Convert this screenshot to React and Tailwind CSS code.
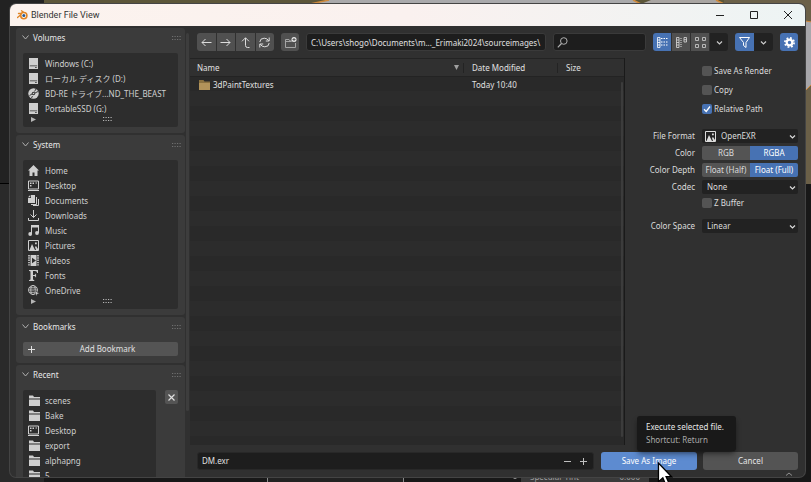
import React, { useState } from 'react';

const volumes = [
  { name: 'Windows (C:)', icon: 'drive' },
  { name: 'ローカル ディスク (D:)', icon: 'drive' },
  { name: 'BD-RE ドライブ...ND_THE_BEAST', icon: 'disc' },
  { name: 'PortableSSD (G:)', icon: 'drive' },
];

const system = [
  { name: 'Home', icon: 'home' },
  { name: 'Desktop', icon: 'desktop' },
  { name: 'Documents', icon: 'documents' },
  { name: 'Downloads', icon: 'download' },
  { name: 'Music', icon: 'music' },
  { name: 'Pictures', icon: 'picture' },
  { name: 'Videos', icon: 'video' },
  { name: 'Fonts', icon: 'font' },
  { name: 'OneDrive', icon: 'globe' },
];

const recent = [
  { name: 'scenes', icon: 'folder' },
  { name: 'Bake', icon: 'folder' },
  { name: 'Desktop', icon: 'desktop' },
  { name: 'export', icon: 'folder' },
  { name: 'alphapng', icon: 'folder' },
  { name: '5', icon: 'folder' },
];

const line = { fill: 'none', stroke: 'currentColor', strokeWidth: 1 };

const shapes = {
  drive: (
    <>
      <path fill="currentColor" fillRule="evenodd" d="M1 0h9v7.500H1zM1 8.300h9V11H1zM7 9.200v.9h1.800v-.9z" />
      <path fill="currentColor" d="M1 7h.8v2H1zM9.200 7h.8v2h-.8z" />
    </>
  ),
  disc: (
    <>
      <circle cx="5.500" cy="5.500" r="5.200" fill="currentColor" />
      <path d="M1.500 7.500L4 6M7 5l3-1.500M3.500 10l1-2M8 1L6.500 3.500" stroke="#2d2d2d" strokeWidth="0.900" />
      <circle cx="5.500" cy="5.500" r="1.700" fill="#2d2d2d" />
      <circle cx="5.500" cy="5.500" r="0.800" fill="currentColor" />
    </>
  ),
  home: <path fill="currentColor" d="M5.500 0L0 5.500h1.500V11h3V7.500h2V11h3V5.500H11z" />,
  desktop: (
    <>
      <path {...line} d="M.5 1h10v8H.5zM0 10.500h11" />
      <path fill="currentColor" d="M2 2.500h1.500V4H2zM4.500 2.500H6V4H4.500zM2 5h1.500v1.500H2zM7.500 2.500H9v1H7.500z" />
    </>
  ),
  documents: (
    <>
      <path fill="currentColor" d="M3 0h4v8H0V3h3z" />
      <path fill="currentColor" d="M0 2.300L2.300 0v2.300z" />
      <path {...line} d="M8.500 2v7.500H3M10.500 4v6.500H5" />
    </>
  ),
  download: <path {...line} d="M5.500 0v7.500M2.500 4.500l3 3 3-3M.5 8v2.500h10V8" />,
  music: (
    <>
      <path fill="currentColor" d="M3 0h8v2.500H3z" />
      <path {...line} d="M3.500 1v8M10.500 1v7" />
      <circle cx="2.200" cy="9" r="1.900" fill="currentColor" />
      <circle cx="9" cy="8" r="1.900" fill="currentColor" />
    </>
  ),
  picture: (
    <>
      <path {...line} d="M.5.5h10v10H.5z" />
      <path fill="currentColor" d="M1.500 10l2.500-6 3 6zM7 2.500h1.800v1.800H7zM7 7l1-1 2 3v1H8z" />
    </>
  ),
  video: (
    <>
      <path fill="currentColor" d="M2.500 0h6v11h-6z" />
      <path d="M1 0v11M10 0v11" stroke="currentColor" strokeWidth="1.600" strokeDasharray="1.400 .9" />
      <path fill="#2d2d2d" d="M4 2.800l4 2.700-4 2.700z" />
    </>
  ),
  font: <path fill="currentColor" d="M1 0h9v3h-.8Q9 1 7 1H5v4h1.200Q7.300 5 7.500 3.700h.6v3.600h-.6Q7.300 6 6.200 6H5v3.500l1.300.7v.8H1v-.8l1.500-.7v-8L1 .8z" />,
  globe: (
    <>
      <circle cx="5" cy="5" r="4.500" {...line} strokeWidth="0.800" />
      <ellipse cx="5" cy="5" rx="2.200" ry="4.500" {...line} strokeWidth="0.800" />
      <path {...line} strokeWidth="0.800" d="M.5 5h9M1.200 2.800h7.600M1.200 7.300h7.600" />
      <path fill="currentColor" stroke="#2d2d2d" strokeWidth="0.500" d="M6.500 5.500l5 3-2.200.5-.8 2.300z" />
    </>
  ),
  folder: <path fill="currentColor" d="M1 0.500h4l1 1.500h6v1.500H1zM1 4.500h11V11H1z" />,
  plus: <path {...line} d="M5.500 2v7M2 5.500h7" />,
  minus: <path {...line} d="M2 5.500h7" />,
  close: <path {...line} strokeWidth="1.200" d="M2.500 2.500l6 6M8.500 2.500l-6 6" />,
  left: <path {...line} d="M10.500 5.500H1M4.500 2L1 5.500 4.500 9" />,
  right: <path {...line} d="M.5 5.500H10M6.500 2L10 5.500 6.500 9" />,
  up: <path {...line} d="M9.500 10.500h-2q-2 0-2-2V.8M2 4.300L5.500.8 9 4.300" />,
  refresh: <path {...line} d="M.8 5Q1 1.200 5.200 1.200q3 0 4.600 2.600M10.200.5v3.500H6.800M10.200 6q-.2 3.800-4.400 3.800-3 0-4.600-2.600M.8 10.500V7h3.400" />,
  newFolder: (
    <>
      <path {...line} stroke="#a5a5a5" d="M.5 10.500v-8H4l1 1.500h2M10.500 6v4.500H.5M.5 4.500h6" />
      <circle cx="9" cy="2.500" r="2.500" fill="#e6e6e6" />
      <path d="M9 1v3M7.500 2.500h3" stroke="#545454" strokeWidth="0.900" />
    </>
  ),
  search: (
    <>
      <circle cx="6.800" cy="4" r="3.300" {...line} />
      <path {...line} strokeWidth="1.200" d="M4.500 6.500L.8 10.300" />
    </>
  ),
  listV: (
    <>
      <path {...line} strokeWidth="0.800" d="M.5.5H3v10H.5zM.5 3H3M.5 5.500H3M.5 8H3" />
      <path {...line} strokeDasharray="1.500 1" d="M4 1.500h7.500M4 5h7.500M4 8h7.500" />
    </>
  ),
  listH: (
    <>
      <path {...line} strokeWidth="0.800" d="M.5.5H3v10H.5zM.5 3H3M.5 5.500H3M.5 8H3M8 .5h2.500V5H8zM8 2.700h2.500" />
      <path {...line} strokeDasharray="1 1" d="M5 1v9" />
    </>
  ),
  thumbs: <path {...line} stroke="#b8b8b8" d="M.5.5h3v3h-3zM7.500.5h3v3h-3zM.5 7.500h3v3h-3zM7.500 7.500h3v3h-3z" />,
  funnel: <path {...line} d="M.5.5h10L7 5.500v5L4.500 8.500v-3z" />,
  chevron: <path {...line} strokeWidth="1.200" d="M3 4.500L5.500 7 8 4.500" />,
  gear: (
    <>
      <circle cx="5.500" cy="5.500" r="2.800" fill="none" stroke="currentColor" strokeWidth="2.200" />
      <circle cx="5.500" cy="5.500" r="4.600" fill="none" stroke="currentColor" strokeWidth="1.700" strokeDasharray="1.806 1.806" />
    </>
  ),
};

const Icon = ({ name, className = '' }) => (
  <svg viewBox="0 0 11 11" aria-hidden="true" className={`h-[11px] w-[11px] shrink-0 overflow-visible ${className}`}>
    {shapes[name]}
  </svg>
);

const Dots = ({ className = '' }) => (
  <svg viewBox="0 0 9 4" aria-hidden="true" className={`h-1 w-[9px] ${className}`}>
    <path d="M0 .5h9M0 3.500h9" stroke="currentColor" strokeDasharray="1.200 1.300" />
  </svg>
);

const Panel = ({ title, children, className = '' }) => (
  <section className={`shrink-0 rounded-[3px] bg-[#3b3b3b] px-[7px] ${className}`}>
    <h2 className="flex h-[19px] items-center gap-1 text-[#e8e8e8]">
      <svg viewBox="0 0 7 5" aria-hidden="true" className="-ml-px h-[5px] w-[7px]">
        <path d="M.5.5l3 3.500 3-3.500" fill="none" stroke="#b0b0b0" />
      </svg>
      {title}
      <Dots className="ml-auto -mr-[3px] text-[#707070]" />
    </h2>
    {children}
  </section>
);

const PlaceList = ({ items, footer, className = '' }) => (
  <div className={`rounded-[2px] bg-[#2d2d2d] pt-[3px] ${className}`}>
    <ul>
      {items.map((item) => (
        <li key={item.name}>
          <button type="button" className="flex h-[15px] w-full items-center gap-[6px] whitespace-nowrap pl-[5px] text-left text-[#cfcfcf]">
            <Icon name={item.icon} />
            {item.name}
          </button>
        </li>
      ))}
    </ul>
    {footer && (
      <div className="flex h-[11px] items-start pl-2 pt-px text-[#b5b5b5]">
        <svg viewBox="0 0 5 5" aria-hidden="true" className="h-[5px] w-[5px]">
          <path d="M0 0l5 2.500L0 5z" fill="currentColor" />
        </svg>
        <Dots className="ml-[67px]" />
      </div>
    )}
  </div>
);

const ToolButton = ({ icon, label, active, dark }) => (
  <button
    type="button"
    aria-label={label}
    className={`flex h-[18px] flex-1 items-center justify-center ${active ? 'bg-[#4772b3] text-white' : dark ? 'bg-[#222222] text-[#cccccc]' : 'bg-[#505050] text-[#dcdcdc]'}`}
  >
    <Icon name={icon} />
  </button>
);

const Check = ({ label, defaultChecked }) => (
  <label className="flex h-[10px] items-center gap-[2px]">
    <span className="relative h-[10px] w-[10px]">
      <input type="checkbox" defaultChecked={defaultChecked} className="peer block h-[10px] w-[10px] appearance-none rounded-[2px] bg-[#545454] checked:bg-[#4772b3]" />
      <svg viewBox="0 0 10 10" aria-hidden="true" className="pointer-events-none absolute inset-0 hidden peer-checked:block">
        <path d="M2 5.200l2.200 2.200L8 2.500" fill="none" stroke="#fff" strokeWidth="1.300" />
      </svg>
    </span>
    {label}
  </label>
);

const SelectRow = ({ id, label, value, icon }) => (
  <div className="flex h-[14px] items-center gap-[7px]">
    <label htmlFor={id} className="w-[70px] text-right">{label}</label>
    <div className="relative h-[14px] flex-1">
      <select id={id} defaultValue={value} className={`block h-[14px] w-full appearance-none rounded-[2px] bg-[#222222] ${icon ? 'pl-[19px]' : 'pl-[5px]'}`}>
        <option>{value}</option>
      </select>
      {icon && <Icon name={icon} className="pointer-events-none absolute left-[3px] top-[2px]" />}
      <Icon name="chevron" className="pointer-events-none absolute right-0 top-[2px]" />
    </div>
  </div>
);

const RadioRow = ({ label, name, options, initial }) => {
  const [value, setValue] = useState(initial);
  return (
    <fieldset className="flex h-[14px] items-center gap-[7px]">
      <span className="w-[70px] text-right">{label}</span>
      <div role="radiogroup" aria-label={label} className="grid flex-1 grid-cols-2 overflow-hidden rounded-[2px]">
        {options.map((option) => (
          <label key={option} className={`flex h-[14px] items-center justify-center whitespace-nowrap ${value === option ? 'bg-[#4772b3] text-white' : 'bg-[#545454]'}`}>
            <input type="radio" name={name} checked={value === option} onChange={() => setValue(option)} className="sr-only" />
            {option}
          </label>
        ))}
      </div>
    </fieldset>
  );
};

// The Blender main window that shows around the edges of the dialog
const Backdrop = () => (
  <div aria-hidden="true" className="absolute inset-0 -z-10 flex flex-col bg-[#181818]">
    <div className="flex h-[184px]">
      <div className="w-11 border-b border-black bg-[#222222]" />
      <svg viewBox="0 0 767 184" preserveAspectRatio="none" className="h-full min-w-0 flex-1">
        <path fill="#5c5639" d="M0 0h767v184H0z" />
        <path fill="#a9a9ab" d="M266 4L285 0h304l8 4z" />
        <path fill="#a9a5a2" d="M597 4l10-4h65l8 4z" />
        <path fill="none" stroke="#d08a3c" strokeWidth="1.500" d="M266 4l19-4M589 0l8 4M672 0l8 4" />
        <path fill="#6b6048" d="M680 0h87v184h-87z" />
        <path fill="#a8a7ab" stroke="#d08a3c" d="M761 21l7 1v62l-7 7z" />
      </svg>
    </div>
    <div className="flex flex-1 items-end text-[#a0a0a0]">
      <div className="h-full w-11 bg-[#2a2a2a]" />
      <div className="ml-[223px] h-[10px] w-[137px] border-x border-[#8a8a8a] bg-[#222222]" />
      <div className="ml-[109px] flex h-[10px] flex-1 items-center">
        <span className="h-1 w-1 rounded-full bg-[#999999]" />
        <div className="ml-1 flex h-full w-[128px] items-center justify-between bg-[#3a3a3a] px-[9px]">
          <span>Specular Tint</span>
          <span>0.000</span>
        </div>
      </div>
    </div>
  </div>
);

const TitleBar = () => (
  <header className="flex h-[22px] shrink-0 items-center rounded-t-[6px] bg-linear-to-r from-[#fcf3ee] via-[#faf1ef] to-[#edf4f4] pl-[7px] font-[Roboto,sans-serif] text-[9px] text-[#333333]">
    <svg viewBox="0 0 11 10" aria-hidden="true" className="h-[10px] w-[11px]">
      <path d="M.5 7.500L6 3M1.500 3.500H6M4.500.8l4 3" stroke="#e08526" strokeWidth="1.400" strokeLinecap="round" />
      <circle cx="6.800" cy="5.600" r="3.100" fill="#fff" stroke="#e08526" strokeWidth="1.600" />
      <circle cx="6.800" cy="5.600" r="1.500" fill="#27588f" />
    </svg>
    <h1 className="ml-[3px]">Blender File View</h1>
    <div className="ml-auto flex text-[#222222]">
      <button type="button" aria-label="Minimize" className="flex w-[34px] justify-center">
        <svg viewBox="0 0 8 8" className="h-2 w-2"><path d="M0 4.500h8" stroke="currentColor" /></svg>
      </button>
      <button type="button" aria-label="Maximize" className="flex w-[34px] justify-center">
        <svg viewBox="0 0 8 8" className="h-2 w-2"><path d="M.5.5h7v7h-7z" fill="none" stroke="currentColor" /></svg>
      </button>
      <button type="button" aria-label="Close" className="flex w-[34px] justify-center">
        <svg viewBox="0 0 8 8" className="h-2 w-2"><path d="M0 0l8 8M8 0L0 8" stroke="currentColor" /></svg>
      </button>
    </div>
  </header>
);

const Sidebar = () => (
  <aside className="flex w-[179px] shrink-0 overflow-hidden rounded-bl-[6px] pl-[6px] pt-[2px]">
    <div className="flex min-w-0 flex-1 flex-col gap-[2px] overflow-hidden">
      <Panel title="Volumes" className="pb-[6px]">
        <PlaceList items={volumes} footer className="mt-[6px]" />
      </Panel>
      <Panel title="System" className="pb-[6px]">
        <PlaceList items={system} footer className="mt-[6px]" />
      </Panel>
      <Panel title="Bookmarks" className="pb-[7px]">
        <button type="button" className="mt-[6px] flex h-[14px] w-full items-center rounded-[2px] bg-[#545454] pl-[3px] text-[#e0e0e0]">
          <Icon name="plus" />
          <span className="flex-1">Add Bookmark</span>
        </button>
      </Panel>
      <Panel title="Recent">
        <div className="mt-[6px] flex items-start justify-between">
          <PlaceList items={recent} className="w-[133px]" />
          <button type="button" aria-label="Clear recent items" className="flex h-[14px] w-[13px] items-center justify-center rounded-[2px] bg-[#545454] text-[#e0e0e0]">
            <Icon name="close" />
          </button>
        </div>
      </Panel>
    </div>
    <div className="ml-px mt-[5px] h-[378px] w-[3px] rounded-full bg-[#3d3d3d]" />
  </aside>
);

const Toolbar = () => (
  <div className="flex h-8 shrink-0 items-center gap-[7px] px-[7px]">
    <div className="flex w-[77px] gap-px overflow-hidden rounded-[3px]">
      <ToolButton icon="left" label="Back" />
      <ToolButton icon="right" label="Forward" />
      <ToolButton icon="up" label="Parent directory" />
      <ToolButton icon="refresh" label="Refresh" />
    </div>
    <div className="flex w-[18px] overflow-hidden rounded-[3px]">
      <ToolButton icon="newFolder" label="New folder" />
    </div>
    <input
      aria-label="Path"
      defaultValue="C:\Users\shogo\Documents\m..._Erimaki2024\sourceimages\"
      className="h-[18px] min-w-0 flex-1 rounded-[3px] border border-[#3a3a3a] bg-[#1d1d1d] px-1 text-[#e0e0e0]"
    />
    <label className="flex h-[18px] w-[93px] items-center rounded-[3px] border border-[#3a3a3a] bg-[#1d1d1d] px-[3px] text-[#b0b0b0]">
      <Icon name="search" />
      <input type="search" aria-label="Search" className="w-full min-w-0 bg-transparent pl-1 outline-none" />
    </label>
    <div className="flex w-[75px] gap-px overflow-hidden rounded-[3px]">
      <ToolButton icon="listV" label="Vertical list" active />
      <ToolButton icon="listH" label="Horizontal list" />
      <ToolButton icon="thumbs" label="Thumbnails" />
      <ToolButton icon="chevron" label="Display settings" dark />
    </div>
    <div className="flex w-[38px] overflow-hidden rounded-[3px]">
      <ToolButton icon="funnel" label="Filter" active />
      <ToolButton icon="chevron" label="Filter settings" dark />
    </div>
    <div className="flex w-[18px] overflow-hidden rounded-[3px]">
      <ToolButton icon="gear" label="Options" active />
    </div>
  </div>
);

const FileTable = () => (
  <div className="relative min-w-0 flex-1 border-r border-[#1a1a1a] bg-[repeating-linear-gradient(#292929_0_15px,#2c2c2c_15px_30px)] bg-[position:0_18px]">
    <table className="w-full table-fixed border-collapse text-left text-[#e0e0e0]">
      <thead className="bg-[#303030]">
        <tr className="h-[18px] border-y border-[#232323]">
          <th className="p-0 pl-[7px] font-normal">
            <span className="flex items-center justify-between pr-1">
              Name
              <svg viewBox="0 0 5 5" aria-hidden="true" className="h-[5px] w-[5px]">
                <path d="M0 0h5L2.500 5z" fill="#a0a0a0" />
              </svg>
            </span>
          </th>
          <th className="w-[94px] p-0 font-normal">
            <span className="block h-[10px] border-l border-[#232323] pl-2 leading-[10px]">Date Modified</span>
          </th>
          <th className="w-[67px] p-0 font-normal">
            <span className="block h-[10px] border-l border-[#232323] pl-2 leading-[10px]">Size</span>
          </th>
        </tr>
      </thead>
      <tbody>
        <tr className="h-4">
          <td className="p-0 pl-[9px]">
            <span className="flex items-center gap-[3px]">
              <svg viewBox="0 0 11 10" aria-hidden="true" className="h-[10px] w-[11px]">
                <path d="M0 0h4.500l1 1.500H11V10H0z" fill="#8a7140" />
                <path d="M0 3h11v7H0z" fill="#b2935a" />
              </svg>
              3dPaintTextures
            </span>
          </td>
          <td className="p-0 pl-[9px]">Today 10:40</td>
          <td className="p-0" />
        </tr>
      </tbody>
    </table>
    <div className="absolute bottom-2 right-px top-6 w-[2px] rounded-full bg-[#3c3c3c]" />
  </div>
);

const Options = () => (
  <form className="w-[180px] shrink-0 pr-[7px] pt-2 text-[#dcdcdc]">
    <div className="flex flex-col gap-[9px] pl-[77px]">
      <Check label="Save As Render" />
      <Check label="Copy" />
      <Check label="Relative Path" defaultChecked />
    </div>
    <div className="mt-[15px] flex flex-col gap-[3px]">
      <SelectRow id="format" label="File Format" value="OpenEXR" icon="picture" />
      <RadioRow label="Color" name="color" options={['RGB', 'RGBA']} initial="RGBA" />
      <RadioRow label="Color Depth" name="depth" options={['Float (Half)', 'Float (Full)']} initial="Float (Full)" />
      <SelectRow id="codec" label="Codec" value="None" />
    </div>
    <div className="mt-1 pl-[77px]">
      <Check label="Z Buffer" />
    </div>
    <div className="mt-[11px]">
      <SelectRow id="space" label="Color Space" value="Linear" />
    </div>
  </form>
);

const Footer = () => (
  <footer className="relative flex h-8 shrink-0 items-start gap-[6px] px-[7px] pt-[7px]">
    <div className="flex h-[18px] min-w-0 flex-1 items-center rounded-[3px] border border-[#282828] bg-[#1d1d1d] px-1 text-[#c0c0c0]">
      <input aria-label="File name" defaultValue="DM.exr" className="min-w-0 flex-1 bg-transparent text-[#e0e0e0]" />
      <button type="button" aria-label="Decrease number" className="mr-[5px]"><Icon name="minus" /></button>
      <button type="button" aria-label="Increase number"><Icon name="plus" /></button>
    </div>
    <div className="relative ml-px w-[96px]">
      <button type="button" className="h-[18px] w-full rounded-[3px] bg-[#5d8bd0] text-white">Save As Image</button>
      <div role="tooltip" className="absolute bottom-[19px] left-9 h-[35px] w-[99px] rounded-[3px] bg-[#191919] pl-[9px] pt-[5px] shadow-md shadow-black/40">
        <p className="h-[13px] text-[#e6e6e6]">Execute selected file.</p>
        <p className="text-[#aaaaaa]">Shortcut: Return</p>
      </div>
      <svg viewBox="0 0 14 22" aria-hidden="true" className="absolute left-14 top-[10px] h-[24px] w-[16px]">
        <path d="M1 1v17l4-3.500 3 7 3-1.300-3-6.700h5z" fill="#fff" stroke="#000" strokeWidth="1.200" />
      </svg>
    </div>
    <button type="button" className="h-[18px] w-[95px] rounded-[3px] bg-[#545454] text-[#e6e6e6]">Cancel</button>
    <svg viewBox="0 0 8 4" aria-hidden="true" className="absolute bottom-px right-3 h-1 w-2">
      <path d="M1 3.500L4 1l3 2.500" fill="none" stroke="#909090" />
    </svg>
  </footer>
);

export default function App() {
  return (
    <div className="relative isolate h-screen overflow-hidden pb-[5px] pl-[10px] pr-[6px] pt-1 font-['Noto_Sans','Noto_Sans_CJK_JP',sans-serif] text-[8px] leading-[12px]">
      <Backdrop />
      <div className="flex h-full flex-col rounded-[6px] bg-[#303030] shadow-[0_0_0_1px_#444444]">
        <TitleBar />
        <div className="flex min-h-0 flex-1">
          <Sidebar />
          <main className="ml-px flex min-w-0 flex-1 flex-col">
            <Toolbar />
            <div className="flex min-h-0 flex-1">
              <FileTable />
              <Options />
            </div>
            <Footer />
          </main>
        </div>
      </div>
    </div>
  );
}
